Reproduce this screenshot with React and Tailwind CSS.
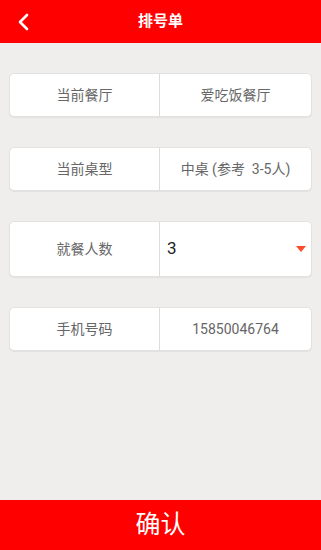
const font = { fontFamily: '"Roboto", "Noto Sans CJK SC", sans-serif' };

const Row = ({ label, children, tall }) => (
  <div
    className={`flex mx-[9px] bg-white rounded-[5px] border border-[#e2e2e2] shadow-[0_1px_1px_rgba(0,0,0,0.06)] ${tall ? 'h-[56px]' : 'h-[44px]'}`}
  >
    <div className="w-[150px] flex items-center justify-center text-[14px] text-[#666666] border-r border-[#dcdcdc]">
      {label}
    </div>
    <div className="flex-1 flex items-center">{children}</div>
  </div>
);

export default function App() {
  return (
    <div className="w-[321px] h-[550px] bg-[#efeeed] flex flex-col" style={font}>
      <div className="h-[43px] bg-[#ff0000] flex items-center relative">
        <svg className="absolute left-[17px] top-[13px]" width="13" height="18" viewBox="0 0 13 18">
          <path d="M10 2 L3 9 L10 16" fill="none" stroke="white" strokeWidth="2.6" strokeLinecap="round" strokeLinejoin="round" />
        </svg>
        <div className="flex-1 text-center text-white text-[15px] font-bold">排号单</div>
      </div>

      <div className="flex flex-col gap-[30px] pt-[30px]">
        <Row label="当前餐厅">
          <div className="flex-1 text-center text-[14px] text-[#666666]">爱吃饭餐厅</div>
        </Row>
        <Row label="当前桌型">
          <div className="flex-1 text-center text-[14px] text-[#666666]">中桌 (参考&nbsp; 3-5人)</div>
        </Row>
        <Row label="就餐人数" tall>
          <div className="flex-1 flex items-center pl-[7px] pr-[5px]">
            <span className="flex-1 text-[17px] text-[#222222]">3</span>
            <svg width="10" height="6" viewBox="0 0 10 6">
              <path d="M0 0 L10 0 L5 6 Z" fill="#ff4a2a" />
            </svg>
          </div>
        </Row>
        <Row label="手机号码">
          <div className="flex-1 text-center text-[14px] text-[#666666]">15850046764</div>
        </Row>
      </div>

      <div className="flex-1" />
      <div className="h-[50px] bg-[#ff0000] flex items-center justify-center text-white text-[25px]">
        确认
      </div>
    </div>
  );
}
